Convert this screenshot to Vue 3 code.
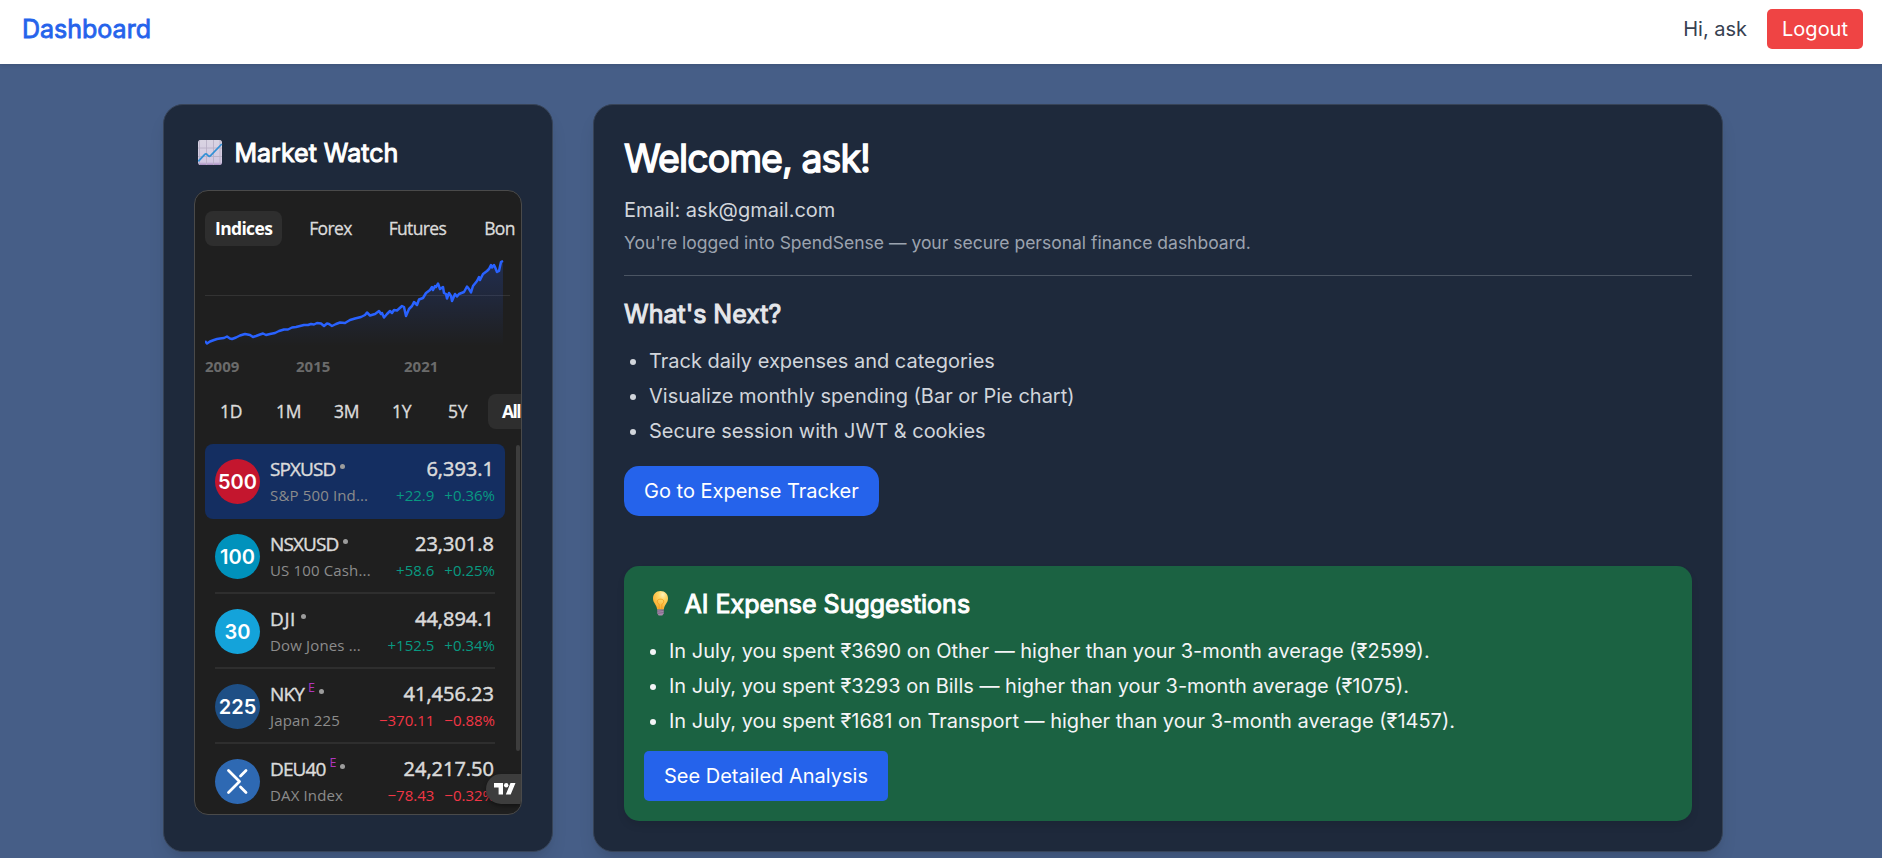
<script setup>
const tabs = [
  { label: 'Indices', active: true },
  { label: 'Forex' },
  { label: 'Futures' },
  { label: 'Bon' },
]
const ranges = ['1D', '1M', '3M', '1Y', '5Y', 'All']
const quotes = [
  { logo: '500', tone: 'red', symbol: 'SPXUSD', name: 'S&P 500 Ind...', price: '6,393.1', change: '+22.9', percent: '+0.36%', active: true },
  { logo: '100', tone: 'teal', symbol: 'NSXUSD', name: 'US 100 Cash...', price: '23,301.8', change: '+58.6', percent: '+0.25%' },
  { logo: '30', tone: 'sky', symbol: 'DJI', loose: true, name: 'Dow Jones ...', price: '44,894.1', change: '+152.5', percent: '+0.34%' },
  { logo: '225', tone: 'navy', symbol: 'NKY', eod: true, name: 'Japan 225', price: '41,456.23', change: '−370.11', percent: '−0.88%', down: true },
  { logo: '', tone: 'blue', symbol: 'DEU40', eod: true, name: 'DAX Index', price: '24,217.50', change: '−78.43', percent: '−0.32%', down: true },
]
const steps = [
  'Track daily expenses and categories',
  'Visualize monthly spending (Bar or Pie chart)',
  'Secure session with JWT & cookies',
]
const suggestions = [
  'In July, you spent ₹3690 on Other — higher than your 3-month average (₹2599).',
  'In July, you spent ₹3293 on Bills — higher than your 3-month average (₹1075).',
  'In July, you spent ₹1681 on Transport — higher than your 3-month average (₹1457).',
]
const line =
  '0,81 2,83.5 5,81.5 9,80 12,79 15,78.5 19,78 22,76.5 25,78.5 27,79 31,77.5 35,75.5 40,74 45,75 48,77 51,76 55,74.5 58,73.5 61,75 65,74 70,73 74,71 79,69.5 83,69.5 87,67.5 91,67 95,66 99,65 103,65 106,64 109,64.5 112,63 116,63.5 119,66 122,63.5 124,64 127,66 131,64 135,62.5 140,63 145,60 150,58.5 156,57 160,55 162,52.5 165,55.5 170,54 174,51 176,54 177,53 179,57.5 182,54 185,51 187,53 189,50 192,50.5 197,46 199,47 201,56 204,49 207,46 209,42 212,45 214,39.5 218,38 221,33 225,30 227,27 228,30 230,26 231,27 233,23.5 235,29 238,27 239,33 241,34 242,38.5 244,33 246,36 247,41 250,34 252,36.5 254,34 259,32 262,26.5 264,29 266,32.5 268,26 272,21 274,17 275,20 278,14 282,11 284,9 286,5 287,7.5 289,5 290,7 292,12 294,11 296,2 298,1'
</script>

<template>
  <div class="page">
    <nav class="navbar">
      <div class="brand faux">Dashboard</div>
      <div class="user">
        <span class="hello">Hi, ask</span>
        <button class="logout">Logout</button>
      </div>
    </nav>

    <main class="content">
      <aside class="card market">
        <h2 class="title faux">
          <svg class="emoji" viewBox="0 0 25 25" width="25" height="25">
            <defs>
              <linearGradient id="paper" x1="0" y1="0" x2="0" y2="1">
                <stop offset="0" stop-color="#d9d4e2" />
                <stop offset="0.88" stop-color="#d3c8e2" />
                <stop offset="1" stop-color="#a78bbf" />
              </linearGradient>
            </defs>
            <rect width="24" height="25" rx="2.5" fill="url(#paper)" />
            <path d="M8.5 0V25M15.5 0V25M22 0V25M0 8H24M0 16.5H24M1.5 0V25" stroke="#b9b0c6" stroke-width="0.9" />
            <path d="M0.3 21.3L6.8 14.3Q8 13.2 9.2 14.6L10.4 15.8Q11.4 16.8 12.6 15.6L23.8 4" fill="none" stroke="#3391d6" stroke-width="1.7" />
          </svg>
          <span>Market Watch</span>
        </h2>

        <div class="widget">
          <div class="tabs">
            <span v-for="t in tabs" :key="t.label" class="tab" :class="{ active: t.active }">{{ t.label }}</span>
          </div>

          <svg class="chart" viewBox="0 0 305 92" width="305" height="92">
            <defs>
              <linearGradient id="area" x1="0" y1="0" x2="0" y2="1">
                <stop offset="0" stop-color="#2962ff" stop-opacity="0.22" />
                <stop offset="1" stop-color="#2962ff" stop-opacity="0" />
              </linearGradient>
            </defs>
            <path d="M0 35.5H305" stroke="#333" />
            <polygon :points="`0,86 ${line} 298,86`" fill="url(#area)" />
            <polyline :points="line" fill="none" stroke="#2962ff" stroke-width="2.5" stroke-linejoin="round" />
          </svg>
          <div class="years"><span>2009</span><span>2015</span><span>2021</span></div>

          <div class="ranges">
            <span v-for="r in ranges" :key="r" class="range" :class="{ active: r === 'All' }">{{ r }}</span>
          </div>

          <div class="list">
            <div v-for="q in quotes" :key="q.symbol" class="row" :class="{ active: q.active }">
              <div class="logo" :class="q.tone">
                <template v-if="q.logo">{{ q.logo }}</template>
                <svg v-else viewBox="0 0 45 45" width="45" height="45">
                  <path d="M13.5 11.5L24.5 22.5L13.5 33.5M31 11.5L25.5 17M25.5 28L31 33.5" fill="none" stroke="#fff" stroke-width="2.8" stroke-linecap="round" stroke-linejoin="round" />
                </svg>
              </div>
              <div class="info">
                <div class="line">
                  <span class="symbol" :class="{ loose: q.loose }">{{ q.symbol }}</span>
                  <span v-if="q.eod" class="eod">E</span>
                  <i class="dot" />
                  <span class="price">{{ q.price }}</span>
                </div>
                <div class="line sub">
                  <span class="name">{{ q.name }}</span>
                  <span class="delta" :class="{ down: q.down }">{{ q.change }}</span>
                  <span class="delta pct" :class="{ down: q.down }">{{ q.percent }}</span>
                </div>
              </div>
            </div>
          </div>
          <div class="scrollbar" />
          <div class="tv">
            <svg viewBox="0 0 22 12" width="22" height="12">
              <path d="M0 0H9V11.5H4.6V4.6H0ZM16.5 0H21.5L16.7 11.5H11.8Z" fill="#fff" />
              <circle cx="12.2" cy="2.3" r="2.2" fill="#fff" />
            </svg>
          </div>
        </div>
      </aside>

      <section class="card main">
        <h1 class="welcome faux">Welcome, ask!</h1>
        <p class="email">Email: ask@gmail.com</p>
        <p class="note">You're logged into SpendSense — your secure personal finance dashboard.</p>
        <hr class="rule" />
        <h2 class="title next faux">What's Next?</h2>
        <ul class="bullets">
          <li v-for="s in steps" :key="s">{{ s }}</li>
        </ul>
        <button class="primary tracker">Go to Expense Tracker</button>

        <div class="suggestions">
          <h2 class="title faux">
            <svg class="emoji" viewBox="0 0 25 25" width="25" height="25">
              <defs>
                <radialGradient id="glass" cx="0.65" cy="0.2" r="0.8">
                  <stop offset="0" stop-color="#fff3b8" />
                  <stop offset="0.35" stop-color="#ffd766" />
                  <stop offset="1" stop-color="#f9ab2e" />
                </radialGradient>
              </defs>
              <path d="M12.5 0C7.9 0 5 3.3 5 7.4C5 11.8 8.6 13.5 9.2 18.4H15.8C16.4 13.5 20 11.8 20 7.4C20 3.3 17.1 0 12.5 0Z" fill="url(#glass)" />
              <path d="M11.2 18V13.2C9.6 12.6 9 11.2 9.3 9.9C9.8 7.6 15.2 7.6 15.7 9.9C16 11.2 15.4 12.6 13.8 13.2V18" fill="none" stroke="#f09a1c" stroke-width="0.8" />
              <path d="M9.3 18.4H15.7V22.4L14.3 24.6H10.7L9.3 22.4Z" fill="#a78bab" />
              <path d="M9.3 20.2L15.7 19.5M9.3 22.3L15.7 21.6" stroke="#6e5478" stroke-width="0.7" />
            </svg>
            <span>AI Expense Suggestions</span>
          </h2>
          <ul class="bullets">
            <li v-for="s in suggestions" :key="s">{{ s }}</li>
          </ul>
          <button class="primary">See Detailed Analysis</button>
        </div>
      </section>
    </main>
  </div>
</template>

<style>
html,
body {
  margin: 0;
  overflow: hidden;
}
</style>

<style scoped>
* {
  box-sizing: border-box;
}
.page {
  height: 858px;
  overflow: hidden;
  background: #465e87;
  font: 400 20px/30px Inter, sans-serif;
}
h1,
h2,
p,
ul {
  margin: 0;
  padding: 0;
  font-weight: 400;
}
button {
  font: inherit;
  border: 0;
  color: #fff;
}
.faux {
  -webkit-text-stroke: 1px currentColor;
}
.navbar {
  position: relative;
  height: 64px;
  padding: 0 19px 6px 22px;
  display: flex;
  align-items: center;
  justify-content: space-between;
  background: #fff;
  box-shadow: 0 1px 4px rgba(0, 0, 0, 0.12);
}
.brand {
  font-size: 25px;
  line-height: 36px;
  color: #2563eb;
  -webkit-text-stroke-width: 0.8px;
}
.user {
  display: flex;
  align-items: center;
  gap: 20px;
}
.hello {
  color: #374151;
}
.logout {
  height: 40px;
  padding: 0 15px;
  border-radius: 5px;
  background: #ef4444;
}
.content {
  display: flex;
  gap: 40px;
  width: 1560px;
  margin: 40px 0 0 163px;
}
.card {
  height: 748px;
  padding: 30px;
  border: 1px solid #374357;
  border-radius: 20px;
  background: #1e293b;
  box-shadow: 0 12px 19px -4px rgba(0, 0, 0, 0.1), 0 5px 8px -5px rgba(0, 0, 0, 0.1);
}
.market {
  width: 390px;
  flex: none;
}
.main {
  flex: 1;
}
.title {
  display: flex;
  align-items: center;
  margin-bottom: -1px;
  font-size: 25px;
  line-height: 36px;
  color: #fff;
}
.emoji {
  margin: 0 12px 1px 3.5px;
}

.widget {
  position: relative;
  height: 625px;
  margin-top: 20px;
  padding: 20px 0 0 10px;
  border: 1px solid #4a4a4a;
  border-radius: 14px;
  background: #1f1f1f;
  overflow: hidden;
  font-family: "Open Sans", sans-serif;
  color: #dbdbdb;
}
.tabs {
  display: flex;
  gap: 17px;
  height: 35px;
  font-size: 17.5px;
  line-height: 35px;
  letter-spacing: -0.65px;
  -webkit-text-stroke: 0.3px currentColor;
}
.tab {
  flex: none;
  padding: 0 10px;
  border-radius: 8px;
}
.tab:last-child {
  padding-left: 11px;
}
.tab.active {
  background: #2e2e2e;
  color: #fff;
  font-weight: 700;
  -webkit-text-stroke: 0;
}
.chart {
  display: block;
  margin-top: 14px;
}
.years {
  display: grid;
  grid-template-columns: 91px 108px auto;
  height: 20px;
  margin-top: 4px;
  font-size: 15px;
  line-height: 20px;
  font-weight: 700;
  color: #6b6b6b;
}
.ranges {
  display: grid;
  grid-template-columns: 56px 58px 58px 56px 55px 56px;
  height: 35px;
  margin-top: 18px;
  font-size: 17.5px;
  line-height: 35px;
  letter-spacing: -0.3px;
  -webkit-text-stroke: 0.35px currentColor;
}
.range {
  padding-left: 15px;
  border-radius: 8px;
}
.range.active {
  padding-left: 14px;
  background: #2e2e2e;
  color: #fff;
  font-weight: 700;
  letter-spacing: -1.6px;
  -webkit-text-stroke: 0;
}
.list {
  width: 300px;
  margin-top: 15px;
}
.row {
  display: flex;
  gap: 10px;
  height: 75px;
  padding: 15px 10px 0;
  position: relative;
}
.row.active {
  background: #142e61;
  border-radius: 8px;
}
.row:not(.active):not(:last-child)::after {
  content: "";
  position: absolute;
  left: 10px;
  right: 10px;
  bottom: 0;
  height: 2px;
  background: #2e2e2e;
}
.logo {
  width: 45px;
  height: 45px;
  flex: none;
  border-radius: 50%;
  font: 600 20px/46px Inter, sans-serif;
  text-align: center;
  color: #fff;
}
.red { background: #c4162e; }
.teal { background: #0092bc; }
.sky { background: #14a3da; }
.navy { background: #1e4f85; }
.blue { background: #2e69b3; }
.info {
  flex: 1;
  min-width: 0;
}
.line {
  display: flex;
  height: 22px;
  line-height: 20px;
  white-space: nowrap;
}
.symbol {
  font-size: 19px;
  letter-spacing: -0.9px;
  -webkit-text-stroke: 0.4px currentColor;
}
.symbol.loose {
  letter-spacing: 0.6px;
}
.eod {
  margin-left: 4px;
  font: 400 12.5px/8px "Open Sans", sans-serif;
  color: #b036bf;
}
.dot {
  width: 5px;
  height: 5px;
  margin: 5px 0 0 4.5px;
  border-radius: 50%;
  background: #9c9c9c;
}
.eod + .dot {
  margin-left: 4px;
}
.price {
  margin-left: auto;
  margin-right: 1px;
  font-size: 20px;
  -webkit-text-stroke: 0.5px currentColor;
}
.sub {
  font-size: 15px;
  line-height: 28px;
}
.name {
  margin-right: auto;
  letter-spacing: 0.15px;
  color: #8c8c8c;
}
.delta {
  color: #089981;
}
.pct {
  margin-left: 10px;
}
.delta.down {
  color: #f23645;
}
.scrollbar {
  position: absolute;
  right: 1px;
  top: 254px;
  width: 4px;
  height: 306px;
  border-radius: 2px;
  background: #3d3d3d;
}
.tv {
  position: absolute;
  right: 0;
  bottom: 10px;
  width: 35px;
  height: 30px;
  padding: 9px 0 0 8px;
  border-radius: 15px 0 0 15px;
  background: #3d3d3d;
  box-shadow: 0 2px 4px rgba(0, 0, 0, 0.4);
  line-height: 0;
}

.welcome {
  margin-bottom: -2px;
  font-size: 37.5px;
  line-height: 47px;
  letter-spacing: -0.94px;
  color: #fff;
  -webkit-text-stroke-width: 1.4px;
}
.email {
  margin-top: 15px;
  color: #d1d5db;
}
.note {
  margin-top: 5px;
  font-size: 17.5px;
  line-height: 25px;
  color: #9ca3af;
}
.rule {
  margin: 20px 0;
  border: 0;
  height: 1px;
  background: #4b5563;
}
.next {
  color: #e5e7eb;
}
.bullets {
  display: flex;
  flex-direction: column;
  gap: 5px;
  margin-top: 15px;
  padding-left: 25px;
  color: #d1d5db;
}
.primary {
  display: block;
  height: 50px;
  padding: 0 20px;
  border-radius: 5px;
  background: #2563eb;
}
.tracker {
  margin-top: 20px;
  border-radius: 15px;
}
.suggestions {
  height: 255px;
  margin-top: 50px;
  padding: 20px;
  border-radius: 15px;
  background: #1b6242;
  box-shadow: 0 5px 8px -1px rgba(0, 0, 0, 0.1);
}
.suggestions .bullets {
  color: #f3f4f6;
}
.suggestions .primary {
  margin-top: 15px;
}
</style>
